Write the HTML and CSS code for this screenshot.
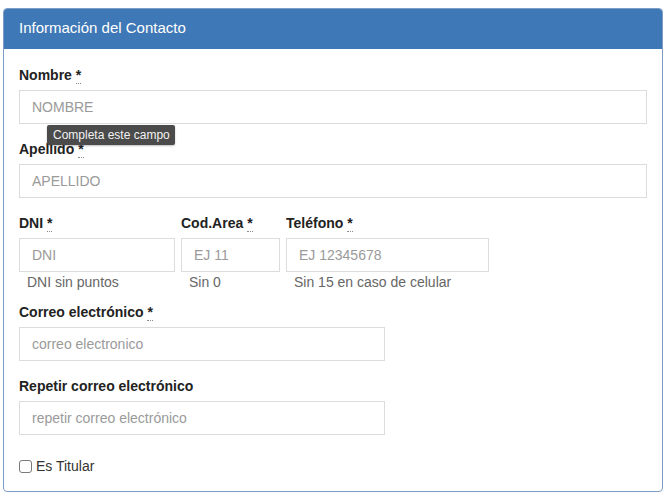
FILE: index.html
```html
<!DOCTYPE html>
<html lang="es">
<head>
<meta charset="utf-8">
<title>Información del Contacto</title>
<link rel="stylesheet" href="styles.css">
</head>
<body>
<div class="panel">
  <div class="panel-heading">Información del Contacto</div>
  <div class="panel-body">
    <div class="form-group has-tip">
      <label class="lbl">Nombre <abbr class="req" title="requerido">*</abbr></label>
      <input class="ctl" type="text" placeholder="NOMBRE">
      <div class="tooltip">Completa este campo</div>
    </div>
    <div class="form-group">
      <label class="lbl">Apellido <abbr class="req" title="requerido">*</abbr></label>
      <input class="ctl" type="text" placeholder="APELLIDO">
    </div>
    <div class="form-row">
      <div class="col col-dni">
        <label class="lbl">DNI <abbr class="req" title="requerido">*</abbr></label>
        <input class="ctl" type="text" placeholder="DNI">
        <p class="help">DNI sin puntos</p>
      </div>
      <div class="col col-area">
        <label class="lbl">Cod.Area <abbr class="req" title="requerido">*</abbr></label>
        <input class="ctl" type="text" placeholder="EJ 11">
        <p class="help">Sin 0</p>
      </div>
      <div class="col col-tel">
        <label class="lbl">Teléfono <abbr class="req" title="requerido">*</abbr></label>
        <input class="ctl" type="text" placeholder="EJ 12345678">
        <p class="help">Sin 15 en caso de celular</p>
      </div>
    </div>
    <div class="form-group narrow">
      <label class="lbl">Correo electrónico <abbr class="req" title="requerido">*</abbr></label>
      <input class="ctl" type="email" placeholder="correo electronico">
    </div>
    <div class="form-group narrow">
      <label class="lbl">Repetir correo electrónico</label>
      <input class="ctl" type="email" placeholder="repetir correo electrónico">
    </div>
    <div class="check">
      <label class="check-lbl"><input class="box" type="checkbox"> Es Titular</label>
    </div>
  </div>
</div>
</body>
</html>
```

FILE: styles.css
```css
html, body {
  margin: 0;
  padding: 0;
  background: #ffffff;
}

body {
  font-family: "Liberation Sans", Arial, sans-serif;
  font-size: 14px;
  line-height: 20px;
  color: #333333;
}

.panel {
  margin: 8px 0 0 3px;
  width: 660px;
  box-sizing: border-box;
  border: 1px solid #7f9cc4;
  border-radius: 4px;
}

.panel-heading {
  background: #3f78b6;
  color: #ffffff;
  font-size: 15px;
  line-height: 18px;
  padding: 10px 15px 12px 15px;
  border-radius: 3px 3px 0 0;
}

.panel-body {
  padding: 16px 15px 15px 15px;
}

.form-group {
  margin-bottom: 15px;
}

.has-tip {
  position: relative;
}

.narrow {
  width: 366px;
}

.lbl {
  display: block;
  font-weight: bold;
  font-size: 14px;
  line-height: 20px;
  margin-bottom: 5px;
  color: #222222;
}

.req {
  text-decoration: none;
  border-bottom: 1px dotted #8a8a8a;
  cursor: help;
}

.ctl {
  display: block;
  width: 100%;
  height: 34px;
  box-sizing: border-box;
  margin: 0;
  padding: 6px 12px;
  border: 1px solid #dcdcdc;
  border-radius: 0;
  background: #ffffff;
  font-family: "Liberation Sans", Arial, sans-serif;
  font-size: 14px;
  line-height: 20px;
  color: #555555;
  outline: none;
}

.ctl::placeholder {
  color: #9a9a9a;
}

.tooltip {
  position: absolute;
  left: 28px;
  top: 60px;
  height: 20px;
  padding: 0 5px 0 6px;
  background: #4b4b4b;
  color: #f2f2f2;
  font-size: 12px;
  line-height: 20px;
  border-radius: 2px;
  white-space: nowrap;
  box-shadow: 0 1px 2px rgba(0, 0, 0, 0.25);
}

.form-row {
  display: flex;
  gap: 6px;
  margin-bottom: 10px;
}

.col-dni { width: 156px; }
.col-area { width: 99px; }
.col-tel { width: 203px; }

.help {
  margin: 0;
  padding-left: 8px;
  font-size: 14px;
  line-height: 20px;
  color: #666666;
  white-space: nowrap;
}

.check {
  margin-top: 21px;
}

.check-lbl {
  display: flex;
  align-items: center;
  font-size: 14px;
  line-height: 20px;
  color: #333333;
}

.box {
  appearance: none;
  -webkit-appearance: none;
  width: 13px;
  height: 13px;
  margin: 0 4px 0 0;
  border: 1px solid #7a7a7a;
  border-radius: 3px;
  background: #ffffff;
  box-sizing: border-box;
}
```
